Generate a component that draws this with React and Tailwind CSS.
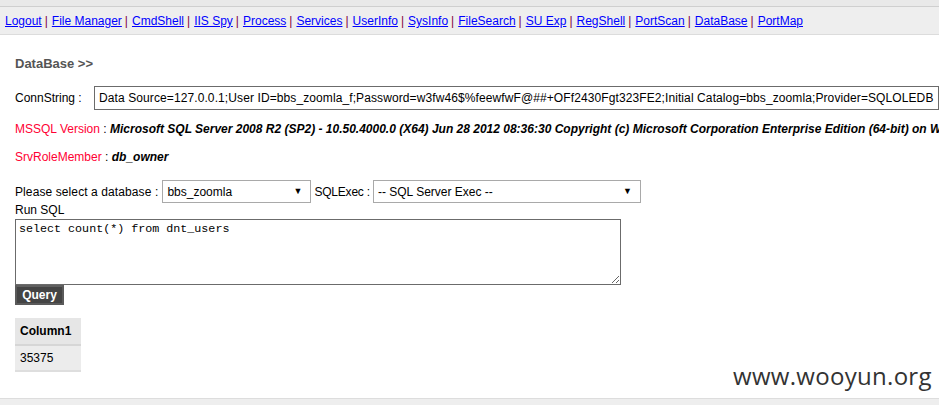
import React from 'react';

const links = ['Logout', 'File Manager', 'CmdShell', 'IIS Spy', 'Process', 'Services', 'UserInfo', 'SysInfo', 'FileSearch', 'SU Exp', 'RegShell', 'PortScan', 'DataBase', 'PortMap'];

const font = { fontFamily: '"Liberation Sans", Arial, sans-serif' };

function Select({ value, className }) {
  return (
    <div className={`h-[23px] border border-[#a9a9a9] bg-white flex items-center justify-between pl-[4px] pr-[8px] text-[12px] text-black ${className}`}>
      <span>{value}</span>
      <span className="text-[9px]">▼</span>
    </div>
  );
}

export default function App() {
  return (
    <div className="w-[939px] h-[405px] bg-white overflow-hidden relative text-[12px] text-black" style={font}>
      {/* BARRA SUPERIOR */}
      <div className="h-[7px] bg-[#e9e9e9] border-b border-[#cfcfcf]" />
      <div className="h-[28px] bg-[#eeeeee] border-b border-[#dcdcdc] flex items-center pl-[5px] pt-[1px]">
        {links.map((l, i) => (
          <span key={l} className="flex">
            {i > 0 && <span className="text-[#800040] pl-[3px] pr-[4px]">|</span>}
            <a href="#" className="text-[#0000ff] underline">{l}</a>
          </span>
        ))}
      </div>

      <div className="pl-[15px]">
        <div className="pt-[21px] text-[13px] font-bold text-[#555] leading-[16px]">DataBase &gt;&gt;</div>

        <div className="flex items-center mt-[14px]">
          <span className="w-[79px]">ConnString :</span>
          <div className="h-[24px] flex-1 border border-[#6b6b6b] flex items-center pl-[4px] whitespace-nowrap overflow-hidden tracking-[0.1px]">
            Data Source=127.0.0.1;User ID=bbs_zoomla_f;Password=w3fw46$%feewfwF@##+OFf2430Fgt323FE2;Initial Catalog=bbs_zoomla;Provider=SQLOLEDB
          </div>
        </div>

        <div className="mt-[12px] whitespace-nowrap leading-[15px]">
          <span className="text-[#ff0033]">MSSQL Version</span> : <span className="font-bold italic">Microsoft SQL Server 2008 R2 (SP2) - 10.50.4000.0 (X64) Jun 28 2012 08:36:30 Copyright (c) Microsoft Corporation Enterprise Edition (64-bit) on Windows NT 6.1 &lt;X64&gt;</span>
        </div>

        <div className="mt-[13px] leading-[15px]">
          <span className="text-[#ff0033]">SrvRoleMember</span> : <span className="font-bold italic">db_owner</span>
        </div>

        <div className="flex items-center mt-[15px]">
          <span className="mr-[4px] tracking-[0.1px]">Please select a database :</span>
          <Select value="bbs_zoomla" className="w-[149px]" />
          <span className="ml-[3px] mr-[3px] tracking-[-0.2px]">SQLExec :</span>
          <Select value="-- SQL Server Exec --" className="w-[268px]" />
        </div>

        <div className="leading-[15px]">Run SQL</div>

        <textarea
          className="block mt-[1px] w-[606px] h-[66px] border border-[#6b6b6b] px-[3px] py-[2px] text-[11.7px] leading-[14px] outline-none"
          style={{ fontFamily: '"Liberation Mono", "Courier New", monospace' }}
          defaultValue="select count(*) from dnt_users"
        />

        <button className="block w-[49px] h-[20px] bg-[#444] border-2 border-[#5a5a5a] border-t-[#606060] text-white font-bold text-[12px] leading-[14px]">
          Query
        </button>

        <table className="mt-[13px] border-collapse">
          <tbody>
            <tr>
              <td className="bg-[#e6e6e6] border-b-2 border-[#d6d6d6] font-bold h-[27px] px-[5px] w-[66px]">Column1</td>
            </tr>
            <tr>
              <td className="bg-[#ececec] border-b-2 border-[#dedede] h-[26px] px-[5px]">35375</td>
            </tr>
          </tbody>
        </table>
      </div>

      {/* MARCA DE AGUA */}
      <div
        className="absolute left-[733px] top-[358px] text-[24px] text-[#333] tracking-[0.3px]"
        style={{ fontFamily: '"Open Sans", "Noto Sans", sans-serif' }}
      >
        www.wooyun.org
      </div>

      {/* PIE */}
      <div className="absolute left-0 right-0 top-[398px] h-[7px] bg-[#eeeeee] border-t border-[#dddddd]" />
    </div>
  );
}
